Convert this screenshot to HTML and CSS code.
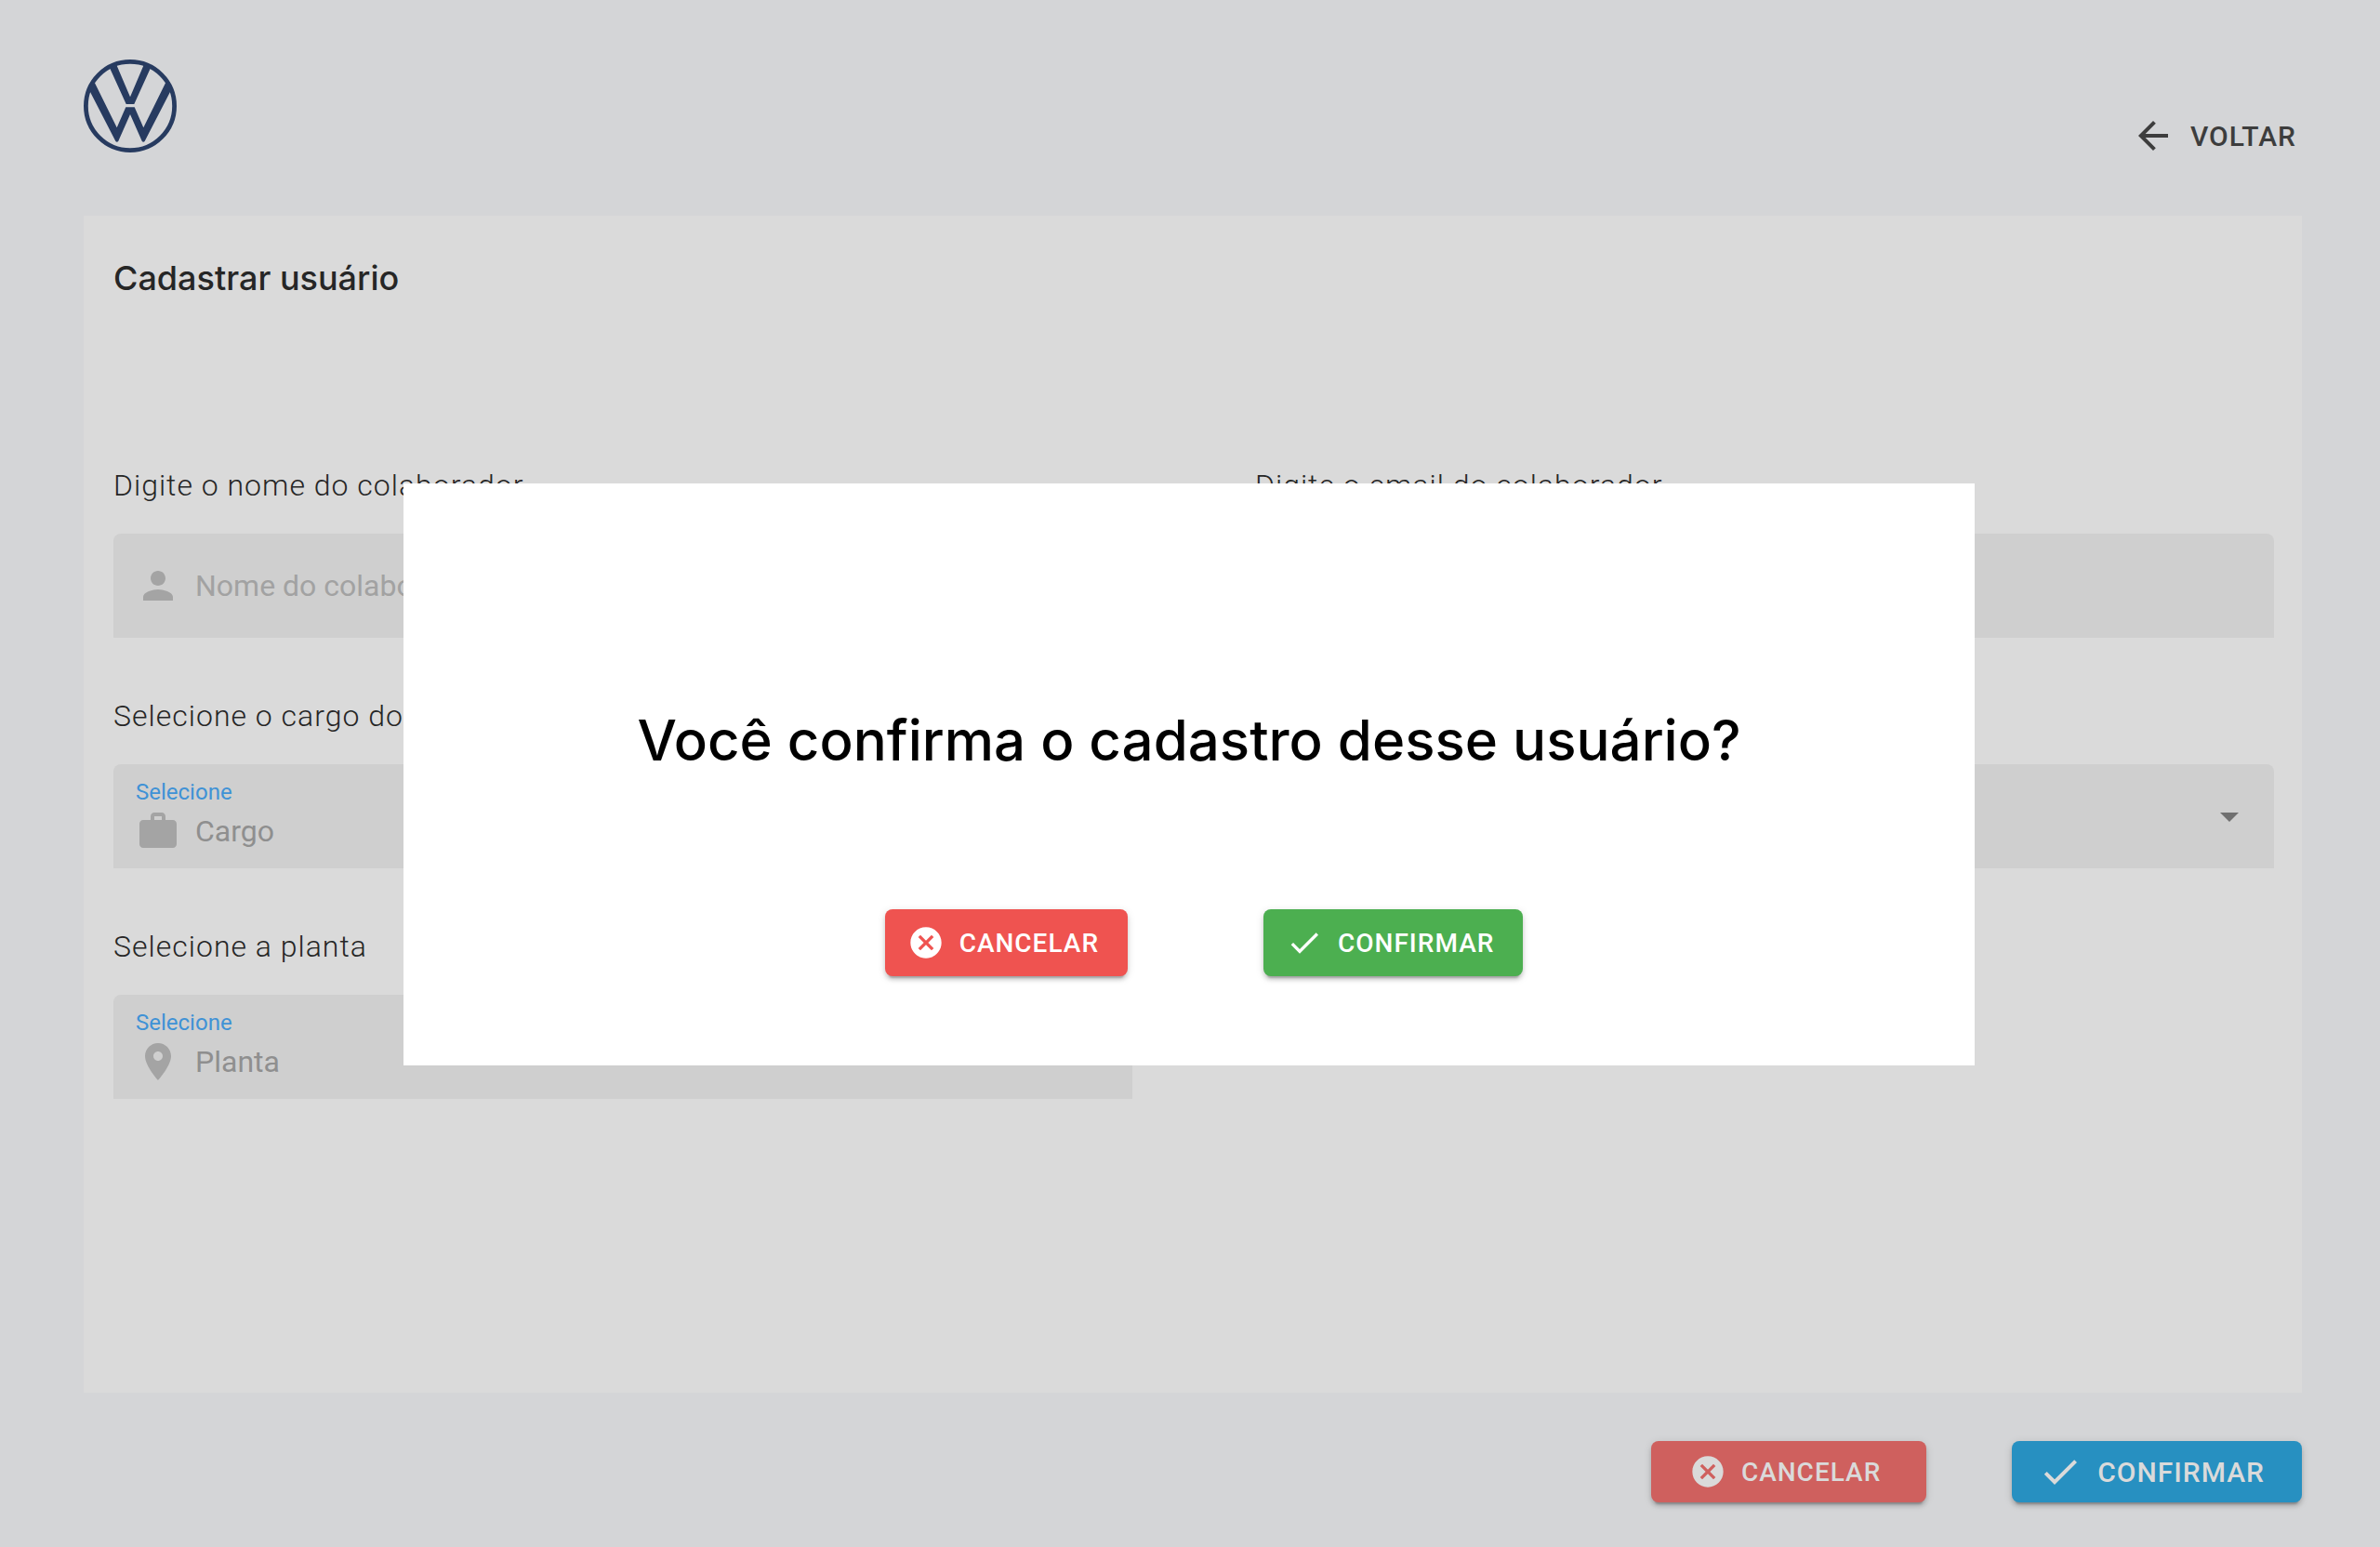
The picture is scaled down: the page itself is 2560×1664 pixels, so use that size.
FILE: index.html
```html
<!DOCTYPE html>
<html lang="pt-BR">
<head>
<meta charset="utf-8">
<meta name="viewport" content="width=device-width, initial-scale=1">
<title>Cadastrar usuário</title>
<link rel="stylesheet" href="styles.css">
</head>
<body>
<div class="page">
  <header class="topbar">
    <svg class="logo" viewBox="0 0 100 100" role="img" aria-label="Volkswagen">
      <circle cx="50" cy="50" r="47.6" fill="none" stroke="currentColor" stroke-width="4.8"/>
      <path fill="currentColor" d="M28 9L45.7 48H54.3L72 9L65 5L50 40.3L35 5Z"/>
      <path fill="currentColor" d="M8 24L5 31L34.4 88Q35.8 89.6 37.2 88L50 59L62.8 88Q64.2 89.6 65.6 88L95 31L92 24L88 25.3L64.3 73.3L54.7 51.3H45.3L35.7 73.3L12 25.3Z"/>
    </svg>
    <button type="button" class="back">
      <svg class="icon-lg" viewBox="0 0 24 24" aria-hidden="true"><path d="M20 11H7.83l5.59-5.59L12 4l-8 8 8 8 1.41-1.41L7.83 13H20v-2z"/></svg>
      Voltar
    </button>
  </header>

  <main class="card">
    <h1 class="card-title">Cadastrar usuário</h1>
    <form class="form" id="cadastro">
      <div class="group">
        <label class="label" for="nome">Digite o nome do colaborador</label>
        <div class="field">
          <svg class="icon-lg field-icon" viewBox="0 0 24 24" aria-hidden="true"><path d="M12 12c2.210 0 4-1.790 4-4s-1.790-4-4-4-4 1.790-4 4 1.790 4 4 4zm0 2c-2.670 0-8 1.340-8 4v2h16v-2c0-2.660-5.330-4-8-4z"/></svg>
          <input class="control" id="nome" type="text" placeholder="Nome do colaborador">
        </div>
      </div>
      <div class="group">
        <label class="label" for="email">Digite o email do colaborador</label>
        <div class="field">
          <svg class="icon-lg field-icon" viewBox="0 0 24 24" aria-hidden="true"><path d="M20 4H4c-1.100 0-2 .9-2 2v12c0 1.100.9 2 2 2h16c1.100 0 2-.9 2-2V6c0-1.100-.9-2-2-2zm0 4l-8 5-8-5V6l8 5 8-5v2z"/></svg>
          <input class="control" id="email" type="email" placeholder="Email do colaborador">
        </div>
      </div>
      <div class="group">
        <label class="label" for="cargo">Selecione o cargo do</label>
        <div class="field field-select">
          <label class="hint" for="cargo">Selecione</label>
          <svg class="icon-lg field-icon" viewBox="0 0 24 24" aria-hidden="true"><path fill-rule="evenodd" d="M20 6h-4V4c0-1.110-.89-2-2-2h-4c-1.110 0-2 .89-2 2v2H4c-1.110 0-2 .89-2 2v11c0 1.110.89 2 2 2h16c1.110 0 2-.89 2-2V8c0-1.110-.89-2-2-2zM14 6h-4V4h4v2z"/></svg>
          <select class="control" id="cargo"><option>Cargo</option></select>
          <svg class="icon-lg arrow" viewBox="0 0 24 24" aria-hidden="true"><path d="M7 10l5 5 5-5z"/></svg>
        </div>
      </div>
      <div class="group">
        <div class="field field-select">
          <select class="control control-bare" id="area" aria-label="Área"><option></option></select>
          <svg class="icon-lg arrow" viewBox="0 0 24 24" aria-hidden="true"><path d="M7 10l5 5 5-5z"/></svg>
        </div>
      </div>
      <div class="group">
        <label class="label" for="planta">Selecione a planta</label>
        <div class="field field-select">
          <label class="hint" for="planta">Selecione</label>
          <svg class="icon-lg field-icon" viewBox="0 0 24 24" aria-hidden="true"><path d="M12 2C8.130 2 5 5.130 5 9c0 5.250 7 13 7 13s7-7.750 7-13c0-3.870-3.130-7-7-7zm0 9.500c-1.380 0-2.500-1.120-2.500-2.500s1.120-2.500 2.500-2.500 2.500 1.120 2.500 2.500-1.120 2.500-2.500 2.500z"/></svg>
          <select class="control" id="planta"><option>Planta</option></select>
          <svg class="icon-lg arrow" viewBox="0 0 24 24" aria-hidden="true"><path d="M7 10l5 5 5-5z"/></svg>
        </div>
      </div>
    </form>
  </main>

  <footer class="actions">
    <button type="button" class="btn btn-cancel">
      <svg class="icon-md" viewBox="0 0 24 24" aria-hidden="true"><path d="M12 2C6.470 2 2 6.470 2 12s4.470 10 10 10 10-4.470 10-10S17.530 2 12 2zm5 13.590L15.590 17 12 13.410 8.410 17 7 15.590 10.590 12 7 8.410 8.410 7 12 10.590 15.590 7 17 8.410 13.410 12 17 15.590z"/></svg>
      Cancelar
    </button>
    <button type="submit" form="cadastro" class="btn btn-submit">
      <svg class="icon-lg" viewBox="0 0 24 24" aria-hidden="true"><path d="M9 16.170L4.830 12l-1.420 1.410L9 19 21 7l-1.410-1.410z"/></svg>
      Confirmar
    </button>
  </footer>
</div>

<dialog class="dialog" open aria-labelledby="dialog-title">
  <h2 class="dialog-title" id="dialog-title">Você confirma o cadastro desse usuário?</h2>
  <div class="dialog-actions">
    <button type="button" class="btn btn-no">
      <svg class="icon-md" viewBox="0 0 24 24" aria-hidden="true"><path d="M12 2C6.470 2 2 6.470 2 12s4.470 10 10 10 10-4.470 10-10S17.530 2 12 2zm5 13.590L15.590 17 12 13.410 8.410 17 7 15.590 10.590 12 7 8.410 8.410 7 12 10.590 15.590 7 17 8.410 13.410 12 17 15.590z"/></svg>
      Cancelar
    </button>
    <button type="button" class="btn btn-yes">
      <svg class="icon-md" viewBox="0 0 24 24" aria-hidden="true"><path d="M9 16.170L4.830 12l-1.420 1.410L9 19 21 7l-1.410-1.410z"/></svg>
      Confirmar
    </button>
  </div>
</dialog>
</body>
</html>
```
FILE: styles.css
```css
* {
  box-sizing: border-box;
}

body {
  margin: 0;
  background: #d4d5d7;
  color: #262626;
  font-family: Roboto, "Liberation Sans", sans-serif;
}

button,
input,
select {
  font: inherit;
  color: inherit;
  border: 0;
  margin: 0;
  padding: 0;
  background: none;
}

svg {
  display: block;
  flex: none;
  fill: currentColor;
}

.icon-md {
  width: 40px;
  height: 40px;
}

.icon-lg {
  width: 48px;
  height: 48px;
}

.page {
  display: flex;
  flex-direction: column;
  gap: 48px;
  min-height: 100vh;
  padding: 64px 84px 48px 90px;
}

.topbar {
  display: flex;
  justify-content: space-between;
  align-items: flex-start;
}

.logo {
  width: 100px;
  height: 100px;
  color: #273b60;
}

.back {
  display: flex;
  align-items: center;
  gap: 16px;
  margin-top: 46px;
  padding: 12px 6px 14px;
  color: #3d3d3d;
  font-size: 30px;
  font-weight: 500;
  letter-spacing: 1px;
  text-transform: uppercase;
}

.card {
  flex: 1;
  padding: 45px 30px 44px 32px;
  background: #dadada;
}

.card-title {
  margin: 0 0 181px;
  font: 500 36px/44px Inter, sans-serif;
}

.form {
  display: grid;
  grid-template-columns: 1fr 1fr;
  gap: 64px 132px;
}

.group {
  display: flex;
  flex-direction: column;
  justify-content: flex-end;
  gap: 32px;
}

.label {
  font-size: 32px;
  font-weight: 300;
  line-height: 40px;
  letter-spacing: 1px;
}

.field {
  display: grid;
  grid-template-columns: 48px 1fr;
  column-gap: 16px;
  align-items: center;
  height: 112px;
  padding: 0 24px;
  border-radius: 8px 8px 0 0;
  background: #cfcfcf;
}

.field-select {
  grid-template-columns: 48px 1fr 48px;
  grid-template-rows: 28px 48px;
  row-gap: 4px;
  padding: 16px 24px;
}

.field-icon {
  color: #a4a4a4;
}

.hint {
  grid-column: 1 / 3;
  color: #3f92d6;
  font-size: 24px;
  line-height: 28px;
}

.arrow {
  grid-column: 3;
  grid-row: 1 / 3;
  color: #707070;
}

.control {
  width: 100%;
  height: 48px;
  outline: 0;
  font-size: 32px;
  appearance: none;
  color: #8f8f8f;
}

.control-bare {
  grid-column: 1 / 3;
  grid-row: 1 / 3;
}

.control::placeholder {
  color: #a2a2a2;
  opacity: 1;
}

.actions {
  display: flex;
  justify-content: flex-end;
  gap: 92px;
  padding-top: 4px;
}

.btn {
  display: flex;
  align-items: center;
  gap: 16px;
  height: 72px;
  padding: 0 31px 0 24px;
  border-radius: 8px;
  color: #fff;
  font-size: 28px;
  font-weight: 500;
  letter-spacing: 1px;
  text-transform: uppercase;
  white-space: nowrap;
  box-shadow: 0 6px 2px -4px rgba(0, 0, 0, .2), 0 4px 4px rgba(0, 0, 0, .14), 0 2px 10px rgba(0, 0, 0, .12);
}

.btn-cancel,
.btn-submit {
  height: 66px;
  color: #dadada;
}

.btn-cancel {
  padding: 0 49px 0 41px;
  background: #cf605e;
}

.btn-submit {
  padding: 0 40px 0 28px;
  background: #2790c1;
  font-size: 30px;
}

.btn-no {
  background: #ef5350;
}

.btn-yes {
  background: #4caf50;
}

.dialog {
  position: fixed;
  inset: 2px 2px 0 0;
  width: 66vw;
  height: fit-content;
  margin: auto;
  padding: 240px 0 96px;
  border: 0;
  background: #fff;
}

.dialog-title {
  margin: 0 0 146px;
  color: #000;
  font: 500 60px/72px Inter, sans-serif;
  text-align: center;
}

.dialog-actions {
  display: flex;
  justify-content: center;
  gap: 146px;
  padding-left: 32px;
}
```
